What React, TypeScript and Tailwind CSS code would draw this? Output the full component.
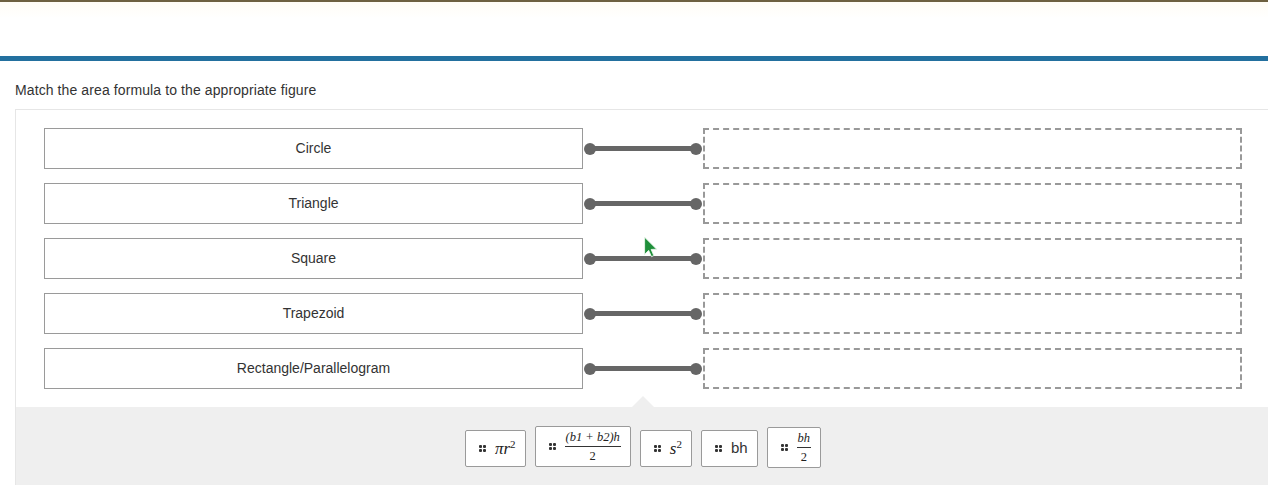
import React from "react";

const figures = ["Circle", "Triangle", "Square", "Trapezoid", "Rectangle/Parallelogram"];

function Grip() {
    return (
        <span className="grid grid-cols-2 gap-[1px] w-[7px] shrink-0">
            <span className="w-[3px] h-[3px] rounded-[1px] bg-[#333]" />
            <span className="w-[3px] h-[3px] rounded-[1px] bg-[#333]" />
            <span className="w-[3px] h-[3px] rounded-[1px] bg-[#333]" />
            <span className="w-[3px] h-[3px] rounded-[1px] bg-[#333]" />
        </span>
    );
}

function Tile({ children, tall }: { children: React.ReactNode; tall?: boolean }) {
    return (
        <div className={`flex items-center gap-[9px] bg-white border border-[#9a9a9a] rounded-[2px] pl-[13px] pr-[9px] ${tall ? "h-[41px]" : "h-[37px]"}`}>
            <Grip />
            {children}
        </div>
    );
}

const math = "font-['Liberation_Serif',serif] italic text-[#222]";

function Frac({ num, den }: { num: React.ReactNode; den: React.ReactNode }) {
    return (
        <span className={`inline-flex flex-col items-center leading-none ${math} text-[12.5px]`}>
            <span className="px-[1px] pb-[3px]">{num}</span>
            <span className="border-t border-[#333] w-full text-center pt-[3px] not-italic">{den}</span>
        </span>
    );
}

function Row({ label }: { label: string }) {
    return (
        <div className="flex items-center h-[41px]">
            <div className="w-[539px] h-full border border-[#9a9a9a] flex items-center justify-center text-[14px] text-[#333]">
                {label}
            </div>
            <div className="w-[120px] flex items-center pl-[1px] pr-[1px]">
                <span className="w-[12px] h-[12px] rounded-full bg-[#666] shrink-0" />
                <span className="flex-1 h-[5px] bg-[#666] -mx-[2px]" />
                <span className="w-[12px] h-[12px] rounded-full bg-[#666] shrink-0" />
            </div>
            <div className="w-[539px] h-full border-2 border-dashed border-[#999]" />
        </div>
    );
}

export default function App() {
    return (
        <div className="relative w-[1268px] h-[485px] overflow-hidden bg-white font-['Liberation_Sans',Arial,sans-serif]">
            <div className="h-[2px] bg-[#6d6040]" />
            <div className="h-[54px] bg-gradient-to-b from-[#fffcf5] to-white to-30%" />
            <div className="h-[5px] bg-[#23709f]" />

            <div className="pl-[15px] pt-[20px]">
                <p className="text-[14px] tracking-[0.1px] text-[#333] leading-[18px]">Match the area formula to the appropriate figure</p>

                <div className="mt-[10px] w-[1256px] border border-[#e6e6e6]">
                    <div className="px-[28px] pt-[18px] pb-[18px] flex flex-col gap-[14px]">
                        {figures.map((f) => (
                            <Row key={f} label={f} />
                        ))}
                    </div>

                    <div className="relative bg-[#efefef] h-[100px] flex justify-center items-start pt-[19px] gap-[9px]">
                        <span className="absolute -top-[11px] left-[616px] w-0 h-0 border-l-[11px] border-r-[11px] border-b-[11px] border-l-transparent border-r-transparent border-b-[#efefef]" />
                        <div className="mt-[4px]">
                            <Tile>
                                <span className={`${math} text-[17px]`}>πr<sup className="text-[11px] not-italic">2</sup></span>
                            </Tile>
                        </div>
                        <Tile tall>
                            <Frac num="(b1 + b2)h" den="2" />
                        </Tile>
                        <div className="mt-[4px]">
                            <Tile>
                                <span className={`${math} text-[17px]`}>s<sup className="text-[11px] not-italic">2</sup></span>
                            </Tile>
                        </div>
                        <div className="mt-[4px]">
                            <Tile>
                                <span className="text-[15px] text-[#333]">bh</span>
                            </Tile>
                        </div>
                        <div className="mt-[1px]">
                            <Tile tall>
                                <Frac num="bh" den="2" />
                            </Tile>
                        </div>
                    </div>
                </div>
            </div>

            <svg className="absolute left-[643px] top-[236px]" width="17" height="23" viewBox="0 0 14 20">
                <path d="M1 1 L1 16 L4.5 12.5 L7 18 L9 17 L6.7 11.7 L11.5 11.5 Z" fill="#1f8f3a" stroke="#e8f5ea" strokeWidth="0.8" />
            </svg>
        </div>
    );
}
